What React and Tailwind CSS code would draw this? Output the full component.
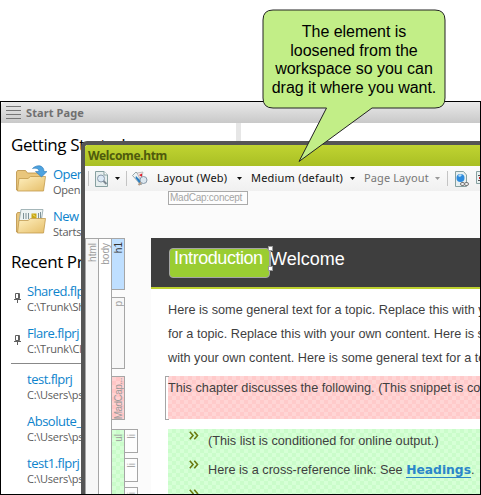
import React from "react";

function OpenFolder({ doc }) {
  return (
    <svg width="32" height="28" viewBox="0 0 32 28" className="block">
      <defs>
        <linearGradient id="folder" x1="0" y1="0" x2="1" y2="1">
          <stop offset="0" stopColor="#fff0c0" />
          <stop offset="1" stopColor="#e6bf6a" />
        </linearGradient>
      </defs>
      <path d="M1.500 25V7l1-1.500h8l2 2.500h14v17z" fill="#e9c67c" stroke="#b98f43" strokeWidth=".8" />
      {doc && (
        <g>
          <path d="M4 15L6 2.500h22l-2 13z" fill="#eef3f2" stroke="#8fa5a8" strokeWidth=".8" />
          <path d="M8.500 6v6M11 6v6M13.500 6v6M23.500 6v6M25.500 5v6" stroke="#7e9297" />
          <path d="M16.500 6.500h5v5h-5z" fill="#c9a712" />
          <path d="M18 7.500l2 2" stroke="#f7ef95" />
        </g>
      )}
      <path d="M2.500 26L4 13.500h9l2.500-2h15L28.500 26z" fill="url(#folder)" stroke="#c39a4c" strokeWidth=".8" />
      {!doc && (
        <path d="M17.500 3.500C22-1 29 0 29 6.500h3l-5.500 5.500-6-5.500h3.500c0-3-3-4-6.500-3z" fill="#4da3e0" stroke="#2d78b5" strokeWidth=".6" />
      )}
    </svg>
  );
}

function Pin() {
  return (
    <svg width="7" height="10" viewBox="0 0 7 10" className="block">
      <path d="M1.500 .5h4v5h-4zM0 6.500h7M3.500 6v4M4.500 1v5" fill="none" stroke="#606060" />
    </svg>
  );
}

function StartItem({ title, sub, children, className }) {
  return (
    <div className={"flex h-[42px] shrink-0 whitespace-nowrap " + className}>
      <div className="shrink-0">{children}</div>
      <div className="flex flex-col">
        <span className="text-[13px] leading-[18px] tracking-[-0.5px] text-[#0d83cc]">{title}</span>
        <span className="text-[11px] leading-[14px] tracking-[-0.25px] text-[#5c5c5c]">{sub}</span>
      </div>
    </div>
  );
}

function StartPage() {
  return (
    <div className="flex h-[394px] w-[481px] flex-col overflow-hidden border border-black bg-white font-['Open_Sans','Noto_Sans',sans-serif]">
      <div className="flex h-[21px] shrink-0 items-center rounded-tl-[4px] bg-gradient-to-b from-[#e9e9e9] to-[#c9c9c9] pl-[5px]">
        <div className="flex w-[15px] flex-col gap-[3px]">
          <i className="h-px bg-[#777]" />
          <i className="h-px bg-[#777]" />
          <i className="h-px bg-[#777]" />
          <i className="h-px bg-[#777]" />
        </div>
        <span className="ml-[5px] font-['Noto_Sans',sans-serif] text-[11px] leading-none font-bold tracking-[0.1px] text-[#707070]">Start Page</span>
      </div>
      <div className="flex flex-1">
        <div className="flex w-[235px] flex-col">
          <h2 className="mt-[10px] ml-[10px] h-[25px] text-[17px] leading-[24px] tracking-[-0.4px] text-black">Getting Started</h2>
          <div className="mt-[7px] flex flex-col">
            <StartItem title="Open" sub="Open a project" className="pl-[14px]">
              <div className="w-[38px]"><OpenFolder /></div>
            </StartItem>
            <StartItem title="New" sub="Starts a project" className="pl-[14px]">
              <div className="w-[38px]"><OpenFolder doc /></div>
            </StartItem>
          </div>
          <h2 className="mt-[1px] ml-[10px] h-[24px] text-[17px] leading-[24px] tracking-[-0.4px] text-black">Recent Projects</h2>
          <div className="mt-[8px] flex flex-col">
            <StartItem title="Shared.flprj" sub="C:\Trunk\Shared" className="pl-[13px]">
              <div className="w-[13px] pt-[11px]"><Pin /></div>
            </StartItem>
            <StartItem title="Flare.flprj" sub="C:\Trunk\Client" className="pl-[13px]">
              <div className="w-[13px] pt-[11px]"><Pin /></div>
            </StartItem>
          </div>
          <div className="-mt-[3px] ml-[10px] h-px bg-[#888]" />
          <div className="mt-[6px] flex flex-col">
            <StartItem title="test.flprj" sub="C:\Users\ps" className="pl-[26px]" />
            <StartItem title="Absolute_" sub="C:\Users\ps" className="pl-[26px]" />
            <StartItem title="test1.flprj" sub="C:\Users\ps" className="pl-[26px]" />
          </div>
        </div>
        <div className="w-[5px] bg-[#e6e6e6]" />
      </div>
    </div>
  );
}

function Caret({ className }) {
  return (
    <svg width="5" height="3" viewBox="0 0 5 3" className={"block shrink-0 " + className}>
      <path d="M0 0h5L2.500 3z" fill="currentColor" />
    </svg>
  );
}

function Toolbar() {
  return (
    <div className="flex h-[25px] shrink-0 items-center bg-gradient-to-b from-[#fcfcfc] to-[#f0f0f0] pl-[3px] font-['Noto_Sans',sans-serif] text-[11px] whitespace-nowrap text-[#111]">
      <i className="h-[15px] w-px shrink-0 bg-[#c4c4c4]" />
      <svg width="13" height="16" viewBox="0 0 13 16" className="ml-[6px] shrink-0">
        <path d="M.5.500h8.500L12.500 4v11.500H.5z" fill="#e6eeee" stroke="#87a0a0" />
        <path d="M9 .5V4h3.500" fill="#fff" stroke="#87a0a0" />
        <circle cx="6" cy="7.500" r="3.500" fill="#dce9f5" stroke="#8999aa" />
        <path d="M8.500 10l3 3" stroke="#7b8791" strokeWidth="2" />
      </svg>
      <Caret className="ml-[7px]" />
      <i className="ml-[6px] h-[15px] w-px shrink-0 bg-[#c4c4c4]" />
      <svg width="16" height="16" viewBox="0 0 16 16" className="ml-[5px] shrink-0">
        <path d="M.5 4.500L4 1l8 8-3 5z" fill="#edf3f4" stroke="#819296" strokeWidth=".8" />
        <path d="M5 2l6-1-2 9z" fill="#f5eaea" stroke="#999" strokeWidth=".6" />
        <path d="M7 4l3-1.500v3.500z" fill="#e01f2d" />
        <path d="M4 5l4 4v4L3.500 7z" fill="#267cc0" />
        <circle cx="11.500" cy="9" r="3.500" fill="#dce7ef" stroke="#899aaa" />
        <path d="M9 11.500L6.500 14" stroke="#b49c87" strokeWidth="2" />
      </svg>
      <span className="ml-[9px] w-[71px] shrink-0 tracking-[0.25px]">Layout (Web)</span>
      <Caret className="ml-[9px]" />
      <span className="ml-[9px] w-[92px] shrink-0 tracking-[0.2px]">Medium (default)</span>
      <Caret className="ml-[7px]" />
      <span className="ml-[9px] w-[65px] shrink-0 tracking-[0.1px] text-[#777]">Page Layout</span>
      <Caret className="ml-[6px] text-[#999]" />
      <i className="ml-[7px] h-[15px] w-px shrink-0 bg-[#c4c4c4]" />
      <svg width="14" height="16" viewBox="0 0 14 16" className="ml-[7px] shrink-0">
        <path d="M.5.500h8L11.500 4v11.500H.5z" fill="#e8f0f0" stroke="#87a0a0" />
        <circle cx="5.500" cy="7" r="4" fill="#2e8bdd" />
        <path d="M3 5c1-2 3-2 4-1L5 6z" fill="#b7ddf6" />
        <rect x="5.500" y="11.500" width="4" height="3" rx="1.500" fill="#eee" stroke="#777" />
        <rect x="9.500" y="11.500" width="4" height="3" rx="1.500" fill="#eee" stroke="#777" />
      </svg>
      <svg width="13" height="16" viewBox="0 0 13 16" className="ml-[7px] shrink-0">
        <path d="M.5.500h10v12H.5z" fill="#e8f0f0" stroke="#87a0a0" />
        <path d="M2 4.500h7M2 9.500h7" stroke="#555" />
        <path d="M3 7h7" stroke="#c22" strokeWidth="2" />
      </svg>
    </div>
  );
}

function Tag({ children, className }) {
  return (
    <div className={"flex shrink-0 items-start justify-center border border-[#a6a6a6] " + className}>
      <span className="rotate-180 text-[10px] leading-[11px] [writing-mode:vertical-rl]">{children}</span>
    </div>
  );
}

function StructureBars() {
  return (
    <div className="flex w-[66px] shrink-0 font-['Liberation_Sans',sans-serif] text-[#9b9b9b]">
      <Tag className="w-[14px] bg-[#f7f7f7] pt-[4px]">html</Tag>
      <Tag className="-ml-px w-[14px] bg-white pt-[4px]">body</Tag>
      <div className="-ml-px flex w-[14px] flex-col">
        <Tag className="h-[52px] bg-[#bfdfff] pt-[3px] text-[#333]">h1</Tag>
        <Tag className="mt-[7px] h-[72px] bg-[#f7f7f7] pt-[3px]">p</Tag>
        <Tag className="mt-[7px] h-[44px] bg-[repeating-conic-gradient(#ffc6c6_0_25%,#ffd2d2_0_50%)] bg-[size:8px_8px] pt-px tracking-[-0.55px]">MadCap...</Tag>
        <Tag className="mt-[9px] h-[70px] bg-[repeating-conic-gradient(#cafcca_0_25%,#d6ffd6_0_50%)] bg-[size:8px_8px] pt-[4px]">ul</Tag>
      </div>
      <div className="-ml-px flex w-[14px] flex-col gap-[5px] pt-[191px]">
        <Tag className="h-[24px] bg-[#fdfdfd] pt-[4px]">li</Tag>
        <Tag className="h-[24px] bg-[#fdfdfd] pt-[4px]">li</Tag>
        <Tag className="h-[24px] bg-[#fdfdfd] pt-[4px]">li</Tag>
      </div>
    </div>
  );
}

function Bullet({ children }) {
  return (
    <li className="flex h-[29px] shrink-0 pl-[21px]">
      <svg width="10" height="9" viewBox="0 0 10 9" className="mt-[2px] mr-[9px] shrink-0">
        <path d="M.8.800L4 4.500.8 8.200M5.300.800L8.500 4.500 5.300 8.200" fill="none" stroke="#6b7a10" strokeWidth="1.600" />
      </svg>
      <span className="pt-[4px] leading-[17px]">{children}</span>
    </li>
  );
}

function Document() {
  return (
    <div className="flex flex-1 flex-col overflow-hidden bg-white font-['Liberation_Sans',Arial,sans-serif] text-[12.7px] whitespace-nowrap text-[#3f3f3f]">
      <div className="flex h-[51px] shrink-0 border-b-2 border-[#bed12f] bg-[#3e3e3e] pl-[18px] text-[18px] leading-[20px] text-white">
        <div className="mt-[10px] h-[30px] w-[101px] rounded-[4px] border border-[#a5a5a5] bg-[#9acd32] pl-[4px] leading-[19px] tracking-[-0.45px]">
          Introduction
        </div>
        <div className="relative mt-[8px] -ml-[2px] flex h-[25px] w-[5px] shrink-0 flex-col items-center justify-between bg-[linear-gradient(90deg,transparent_1px,#a5a5a5_1px,#a5a5a5_3px,transparent_3px)]">
          <i className="h-[5px] w-[5px] border border-[#999] bg-white" />
          <i className="h-[5px] w-[5px] border border-[#999] bg-white" />
        </div>
        <span className="-ml-[3px] pt-[11px]">Welcome</span>
      </div>
      <div className="mt-[9px] ml-[17px] flex h-[72px] shrink-0 flex-col leading-[24px]">
        <span>Here is some general text for a topic. Replace this with your own</span>
        <span>for a topic. Replace this with your own content. Here is some</span>
        <span>with your own content. Here is some general text for a topic.</span>
      </div>
      <div className="mt-[6px] ml-[14px] flex h-[44px] shrink-0">
        <i className="z-10 -mr-px w-[4px] shrink-0 border-y border-l border-[#a5a5a5]" />
        <div className="h-[43px] min-w-0 flex-1 bg-[repeating-conic-gradient(#ffcaca_0_25%,#ffd5d5_0_50%)] bg-[size:8px_8px] leading-[24px]">
          This chapter discusses the following. (This snippet is conditioned)
        </div>
      </div>
      <ul className="mt-[9px] ml-[17px] flex h-[80px] shrink-0 flex-col bg-[repeating-conic-gradient(#cafcca_0_25%,#d6ffd6_0_50%)] bg-[size:8px_8px]">
        <Bullet>(This list is conditioned for online output.)</Bullet>
        <Bullet>
          Here is a cross-reference link: See{" "}
          <a className="border-b border-[#2b86c9] font-['DejaVu_Sans',sans-serif] text-[12.3px] font-bold text-[#2b86c9]">Headings</a>.
        </Bullet>
        <Bullet>
          Here is a cross-reference link: See{" "}
          <a className="font-['DejaVu_Sans',sans-serif] text-[12.3px] font-bold text-[#2b86c9]">Page Group</a>.
        </Bullet>
      </ul>
    </div>
  );
}

function FloatingWindow() {
  return (
    <div className="absolute top-[141px] left-[81px] flex h-[353px] w-[399px] flex-col overflow-hidden rounded-tl-[6px] border-t-4 border-l-4 border-[#555] bg-[#fbfbfb]">
      <div className="flex h-[21px] shrink-0 items-center rounded-tl-[2px] bg-gradient-to-b from-[#c0d431] to-[#a9bf24] pl-[3px] font-['Noto_Sans',sans-serif] text-[12px] font-bold tracking-[-0.35px] text-[#4e5a0c]">
        Welcome.htm
      </div>
      <Toolbar />
      <div className="mb-[33px] ml-[83px] h-[14px] w-[80px] shrink-0 border border-[#aaa] bg-[#fdfdfd] pl-px font-['Liberation_Sans',sans-serif] text-[10px] leading-[12px] tracking-[-0.25px] text-[#a5a5a5]">
        MadCap:concept
      </div>
      <div className="flex flex-1">
        <StructureBars />
        <Document />
      </div>
    </div>
  );
}

function Callout() {
  return (
    <div className="absolute top-[9px] left-[262px] h-[154px] w-[184px]">
      <svg width="185" height="154" viewBox="0 0 185 154" className="absolute top-0 left-0">
        <path
          d="M11 1H173Q183 1 183 11V89Q183 99 173 99H110L37 152.500L64.500 99H11Q1 99 1 89V11Q1 1 11 1Z"
          fill="#c2ee87"
          stroke="#222"
        />
      </svg>
      <p className="relative pt-[14px] text-center font-['Liberation_Sans',Arial,sans-serif] text-[16px] leading-[18.600px] tracking-[-0.04px] whitespace-nowrap text-black">
        The element is
        <br />
        loosened from the
        <br />
        workspace so you can
        <br />
        drag it where you want.
      </p>
    </div>
  );
}

export default function App() {
  return (
    <div className="relative h-[495px] w-[481px] overflow-hidden bg-white pt-[101px]">
      <StartPage />
      <FloatingWindow />
      <Callout />
    </div>
  );
}
